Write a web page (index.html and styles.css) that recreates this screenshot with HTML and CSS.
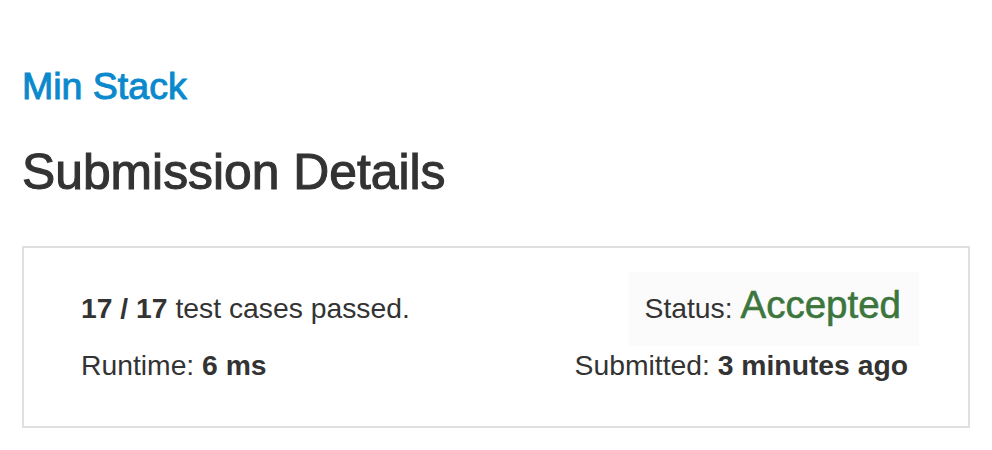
FILE: index.html
```html
<!DOCTYPE html>
<html lang="en">
<head>
<meta charset="utf-8">
<title>Submission Details</title>
<link rel="stylesheet" href="styles.css">
</head>
<body>
<main class="page">
  <h3 class="problem"><a href="#" class="problem-link">Min Stack</a></h3>
  <h2 class="title">Submission Details</h2>
  <section class="card">
    <div class="cell passed"><strong>17 / 17</strong> test cases passed.</div>
    <div class="cell status-box">Status: <span class="accepted">Accepted</span></div>
    <div class="cell runtime">Runtime: <strong>6 ms</strong></div>
    <div class="cell submitted">Submitted: <strong>3 minutes ago</strong></div>
  </section>
</main>
</body>
</html>
```
FILE: styles.css
```css
* { box-sizing: border-box; }
html, body { margin: 0; background: #fff; }
body {
  font-family: "Liberation Sans", Arial, sans-serif;
  color: #333;
}
.page {
  padding: 66px 22px 0;
}
.problem {
  margin: 0;
  font-size: 37.5px;
  line-height: 1.1;
  font-weight: normal;
}
.problem-link {
  color: #0a89cc;
  text-decoration: none;
  -webkit-text-stroke: 1px #0a89cc;
}
.title {
  margin: 38px 0 46px;
  font-size: 49.8px;
  line-height: 1.1;
  font-weight: normal;
  color: #333;
  -webkit-text-stroke: 1.1px #333;
}
.card {
  border: 2px solid #e0e0e0;
  padding: 24px 60px 42px 57px;
  display: grid;
  grid-template-columns: 1fr auto;
  grid-template-rows: 74px 38px;
  align-items: baseline;
  font-size: 28.3px;
  line-height: 38px;
}
.cell strong { font-weight: bold; }
.status-box {
  justify-self: end;
  margin-right: -11px;
  background: #fbfbfb;
  padding: 13px 18px 18px 16px;
  line-height: 40px;
}
.passed { line-height: 40px; }
.accepted {
  color: #3c763d;
  font-size: 38.5px;
  -webkit-text-stroke: 0.6px #3c763d;
}
.submitted { justify-self: end; }
```
